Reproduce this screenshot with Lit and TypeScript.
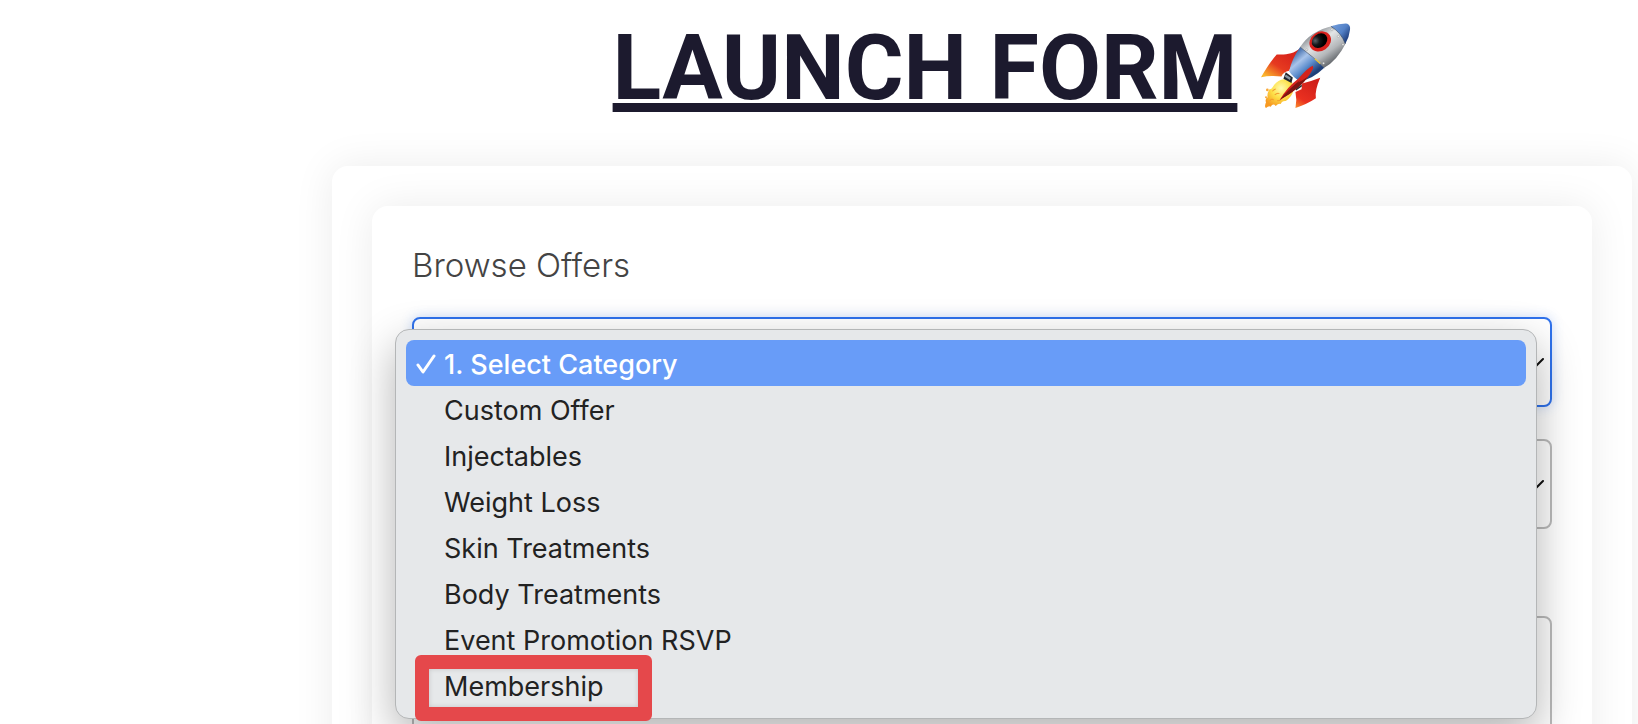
import { LitElement, html, css, svg } from "lit";
import { customElement, state } from "lit/decorators.js";
import { classMap } from "lit/directives/class-map.js";

const CATEGORIES = [
  "1. Select Category",
  "Custom Offer",
  "Injectables",
  "Weight Loss",
  "Skin Treatments",
  "Body Treatments",
  "Event Promotion RSVP",
  "Membership",
];

const rocket = svg`
  <defs>
    <linearGradient id="hull" x1="210" y1="75" x2="275" y2="165" gradientUnits="userSpaceOnUse">
      <stop offset="0" stop-color="#8f9499" />
      <stop offset=".3" stop-color="#e3e5e6" />
      <stop offset=".65" stop-color="#b4b7ba" />
      <stop offset="1" stop-color="#55595e" />
    </linearGradient>
    <linearGradient id="blue" x1="165" y1="125" x2="220" y2="190" gradientUnits="userSpaceOnUse">
      <stop offset="0" stop-color="#3c68a8" />
      <stop offset=".35" stop-color="#a9c4ea" />
      <stop offset=".65" stop-color="#5f8fce" />
      <stop offset="1" stop-color="#1f3f78" />
    </linearGradient>
    <linearGradient id="nose" x1="285" y1="45" x2="330" y2="80" gradientUnits="userSpaceOnUse">
      <stop offset="0" stop-color="#6c97d6" />
      <stop offset=".5" stop-color="#5482c8" />
      <stop offset="1" stop-color="#1d3b78" />
    </linearGradient>
    <linearGradient id="fin" x1="135" y1="125" x2="85" y2="200" gradientUnits="userSpaceOnUse">
      <stop offset="0" stop-color="#d9261c" />
      <stop offset=".5" stop-color="#e63a20" />
      <stop offset="1" stop-color="#fbb62c" />
    </linearGradient>
    <linearGradient id="fin2" x1="225" y1="210" x2="172" y2="290" gradientUnits="userSpaceOnUse">
      <stop offset="0" stop-color="#cf1f1a" />
      <stop offset=".7" stop-color="#ea3020" />
      <stop offset="1" stop-color="#f8862a" />
    </linearGradient>
    <radialGradient id="flame" cx="125" cy="232" r="58" gradientUnits="userSpaceOnUse">
      <stop offset="0" stop-color="#fffbb0" />
      <stop offset=".5" stop-color="#fde047" />
      <stop offset="1" stop-color="#f79a22" />
    </radialGradient>
    <radialGradient id="glass" cx="230" cy="82" r="26" gradientUnits="userSpaceOnUse">
      <stop offset="0" stop-color="#5a6268" />
      <stop offset=".5" stop-color="#15181b" />
      <stop offset="1" stop-color="#000" />
    </radialGradient>
  </defs>
  <path fill="url(#fin)" d="M183 112 C160 131 140 132 112 131 Q92 153 65 199 Q96 193 126 197 Q132 183 149 180 Z" />
  <path fill="url(#fin2)" d="M242 201 Q214 212 188 218 L186 235 L168 243 Q173 266 168 291 Q204 279 229 262 Q225 240 242 201Z" />
  <path fill="url(#flame)" d="M134 205 Q116 207 104 222 Q96 237 90 235 Q82 250 85 259 Q76 264 80 274 Q74 288 80 291 Q88 283 94 287 Q101 276 109 285 Q117 277 124 279 Q127 269 139 270 Q158 258 163 236 L158 214Z" />
  <path fill="none" stroke="#f49a2c" stroke-width="3" d="M91 270q7-9 12-2M106 252q8-8 14-4M113 269q8 2 13-5M99 241q5-6 10-7" />
  <circle cx="84" cy="237" r="4" fill="#f9a83b" />
  <circle cx="80" cy="259" r="3" fill="#f9a83b" />
  <path fill="#20252b" d="M139 184 L160 200 L156 216 L132 204Z" />
  <path fill="#8996a2" d="M139 191 L154 201 L151 207 L136 198Z" />
  <path fill="url(#blue)" d="M182 109 Q158 143 149 181 Q160 198 181 211 Q218 206 254 171 Q222 140 182 109Z" />
  <path fill="url(#hull)" d="M182 109 Q211 61 282 45 Q309 61 318 98 Q293 148 254 171 Q222 142 182 109Z" />
  <path fill="url(#nose)" d="M274 47 Q300 38 323 39 Q333 43 331 57 Q329 79 317 99 Q305 66 274 47Z" />
  <path fill="none" stroke="#334664" stroke-width="2" d="M182 109 Q222 139 254 171M274 47Q305 66 317 99" />
  <path stroke="#e6c63e" stroke-width="4" d="M226 144l16 14" />
  <ellipse cx="242" cy="92" rx="34" ry="28" transform="rotate(-34 242 92)" fill="#d9211d" />
  <ellipse cx="240" cy="90" rx="25" ry="20" transform="rotate(-38 240 90)" fill="url(#glass)" />
  <g fill="#fafafa" stroke="#777" stroke-width="1">
    <circle cx="202" cy="117" r="3" /><circle cx="252" cy="157" r="3" />
    <circle cx="277" cy="56" r="3" /><circle cx="296" cy="77" r="3" />
    <circle cx="310" cy="101" r="3" />
  </g>
  <path fill="#d5231c" d="M220 165 Q207 169 177 203 Q143 229 121 267 Q153 249 177 229 Q207 202 221 172Z" />
  <path fill="#7e1512" d="M185 205 Q148 234 121 267 Q153 249 177 229 Q195 213 206 197 Q188 210 176 215Z" />
  <path fill="#24282c" d="M169 235l18-14v6l-17 12z" />
`;

const chevron = html`<svg class="chevron" viewBox="0 0 24 24" aria-hidden="true">
  <path d="M2 9l10 10L22 9" />
</svg>`;

@customElement("app-root")
export class AppRoot extends LitElement {
  @state() private open = true;
  @state() private selected = 0;

  static styles = css`
    :host {
      display: block;
      box-sizing: border-box;
      height: 100vh;
      overflow: hidden;
      padding: 14px 6px 0 332px;
      background: #fff;
      font-family: Inter, "Liberation Sans", sans-serif;
    }
    * {
      box-sizing: border-box;
    }
    h1 {
      display: flex;
      justify-content: center;
      align-items: center;
      gap: 22px;
      margin: 0 0 42px;
      font: 700 90px/110px Roboto, sans-serif;
      color: #1c1a2e;
    }
    .title {
      text-decoration: underline;
      text-decoration-thickness: 9px;
      text-underline-offset: 4px;
      text-decoration-skip-ink: none;
    }
    .rocket {
      width: 92px;
      height: 86px;
      overflow: visible;
    }
    .panel {
      padding: 40px;
      border-radius: 16px;
      background: #fff;
      box-shadow: 0 0 40px rgba(0, 0, 0, 0.08);
    }
    .form {
      display: flex;
      flex-direction: column;
      gap: 32px;
    }
    .heading {
      font-size: 33px;
      font-weight: 300;
      line-height: 39px;
      color: #444;
    }
    .field {
      position: relative;
      display: grid;
      align-items: center;
    }
    .field > select,
    .field > .chevron {
      grid-area: 1 / 1;
    }
    select,
    textarea {
      width: 100%;
      height: 90px;
      padding: 0 32px;
      border: 2px solid #bbb;
      border-radius: 8px;
      outline: none;
      background: #fff;
      color: #222;
      font: 28px Inter, sans-serif;
      appearance: none;
      resize: none;
    }
    select.active {
      border-color: #2f72ec;
      box-shadow: 0 0 12px rgba(47, 114, 236, 0.25);
    }
    textarea {
      display: block;
      height: 180px;
      margin-top: 55px;
    }
    .chevron {
      justify-self: end;
      width: 24px;
      height: 24px;
      margin-right: 7px;
      fill: none;
      stroke: #111;
      stroke-width: 2;
      stroke-linecap: round;
      pointer-events: none;
    }
    .menu {
      position: absolute;
      z-index: 2;
      top: 12px;
      left: -17px;
      right: 15px;
      margin: 0;
      padding: 10px;
      list-style: none;
      border: 1px solid #b4b6b7;
      border-radius: 14px;
      background: #e6e8ea;
      box-shadow: 0 16px 44px rgba(0, 0, 0, 0.3);
    }
    .option {
      position: relative;
      display: flex;
      align-items: center;
      height: 46px;
      padding: 2px 0 0 10px;
      border-radius: 8px;
      color: #222;
      font-size: 27px;
      cursor: default;
    }
    .option.selected {
      background: #689cf8;
      color: #fff;
      font-weight: 500;
    }
    .tick {
      width: 20px;
      height: 20px;
      margin-right: 8px;
      fill: none;
      stroke: #fff;
      stroke-width: 3;
      stroke-linecap: round;
      stroke-linejoin: round;
      visibility: hidden;
    }
    .selected .tick {
      visibility: visible;
    }
    .marker {
      position: absolute;
      top: -7px;
      left: 9px;
      width: 237px;
      height: 66px;
      border: 14px solid #e5484b;
      border-radius: 6px;
      box-shadow: inset 0 0 5px rgba(0, 0, 0, 0.15);
      pointer-events: none;
    }
  `;

  private choose(index: number) {
    this.selected = index;
    this.open = false;
  }

  private toggle(event: Event) {
    event.preventDefault();
    this.open = !this.open;
  }

  render() {
    return html`
      <h1>
        <span class="title">LAUNCH FORM</span>
        <svg class="rocket" viewBox="60 46 273 257" role="img" aria-label="Rocket">${rocket}</svg>
      </h1>
      <main class="panel">
        <form class="panel form">
          <label class="heading" for="category">Browse Offers</label>
          <div class="field">
            <select id="category" class="active" .selectedIndex=${this.selected} @mousedown=${this.toggle}>
              ${CATEGORIES.map((name, i) => html`<option ?selected=${i === this.selected}>${name}</option>`)}
            </select>
            ${chevron}
            ${this.open
              ? html`<ul class="menu" role="listbox" aria-label="Category">
                  ${CATEGORIES.map(
                    (name, i) => html`<li
                      role="option"
                      aria-selected=${i === this.selected}
                      class=${classMap({ option: true, selected: i === this.selected })}
                      @click=${() => this.choose(i)}
                    >
                      <svg class="tick" viewBox="0 0 20 20" aria-hidden="true">
                        <path d="M2 11l5 7L18 2" />
                      </svg>
                      ${name}
                      ${name === "Membership" ? html`<span class="marker"></span>` : null}
                    </li>`,
                  )}
                </ul>`
              : null}
          </div>
          <div class="field">
            <select aria-label="Offer"></select>
            ${chevron}
          </div>
          <textarea aria-label="Details"></textarea>
        </form>
      </main>
    `;
  }
}
